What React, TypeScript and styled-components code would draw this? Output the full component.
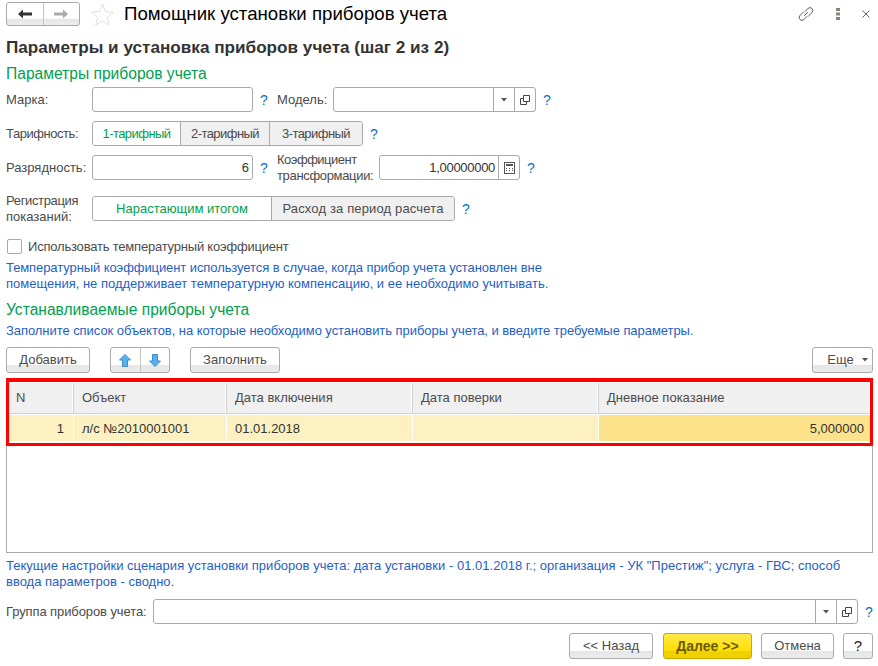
import styled, { createGlobalStyle } from 'styled-components';

const GlobalStyle = createGlobalStyle`
  html, body {
    margin: 0;
    padding: 0;
    background: #fff;
    font-family: "Liberation Sans", Arial, sans-serif;
    font-size: 13px;
    color: #4b4b4b;
  }
  * {
    box-sizing: border-box;
  }
`;

const btnBg = 'linear-gradient(#fff 0, #fff 70%, #e6e6e6 72%, #ececec 100%)';

const Page = styled.div`
  width: 878px;
  height: 666px;
  padding: 2px 5px 0 6px;
  overflow: hidden;
`;

const TitleBar = styled.div`
  display: flex;
  align-items: center;
  height: 24px;
`;

const NavGroup = styled.div`
  display: flex;
  width: 74px;
  height: 24px;
  border: 1px solid #a9a9a9;
  border-radius: 3px;
  background: ${btnBg};
`;

const NavBtn = styled.div<{ $divided?: boolean }>`
  flex: 1;
  display: flex;
  align-items: center;
  justify-content: center;
  border-left: ${(p) => (p.$divided ? '1px solid #c4c4c4' : 'none')};
`;

const StarBox = styled.div`
  display: flex;
  margin-left: 11px;
`;

const Title = styled.div`
  margin-left: 10px;
  font-size: 18.67px;
  color: #000;
  flex: 1;
`;

const TitleTools = styled.div`
  display: flex;
  align-items: center;
  gap: 22px;
  margin-right: 3px;
`;

const Heading = styled.div`
  margin-top: 11px;
  font-size: 17.15px;
  font-weight: bold;
  line-height: 20px;
  color: #333;
`;

const SectionTitle = styled.div<{ $top: number }>`
  margin-top: ${(p) => p.$top}px;
  font-size: 15.6px;
  line-height: 18px;
  color: #00a04f;
`;

const FormRow = styled.div<{ $top: number }>`
  display: flex;
  align-items: center;
  height: 25px;
  margin-top: ${(p) => p.$top}px;
`;

const Label = styled.div<{ $w: number }>`
  width: ${(p) => p.$w}px;
  flex: none;
  line-height: 16px;
  color: #4b4b4b;
`;

// the original's hinted text runs a little wider or narrower per word
const TextLine = styled.div<{ $spread?: number }>`
  white-space: nowrap;
  letter-spacing: ${(p) => p.$spread ?? 0}px;
`;

const Field = styled.div<{ $w: number }>`
  display: flex;
  align-items: stretch;
  flex: none;
  width: ${(p) => p.$w}px;
  height: 25px;
  border: 1px solid #a9a9a9;
  border-radius: 3px;
  background: #fff;
`;

const FieldValue = styled.div<{ $spread?: number }>`
  flex: 1;
  text-align: right;
  line-height: 23px;
  padding-right: 3px;
  letter-spacing: ${(p) => p.$spread ?? 0}px;
  color: #333;
`;

const FieldBtn = styled.div`
  flex: none;
  width: 21px;
  display: flex;
  align-items: center;
  justify-content: center;
  border-left: 1px solid #a9a9a9;
`;

const Help = styled.div<{ $w: number }>`
  flex: none;
  width: ${(p) => p.$w}px;
  padding-left: 7px;
  font-size: 14px;
  color: #0a72c4;
`;

const Segments = styled.div`
  display: flex;
  flex: none;
  height: 25px;
  border: 1px solid #a9a9a9;
  border-radius: 3px;
  overflow: hidden;
`;

const Segment = styled.div<{ $w: number; $active?: boolean; $spread?: number }>`
  width: ${(p) => p.$w}px;
  display: flex;
  align-items: center;
  justify-content: center;
  letter-spacing: ${(p) => p.$spread ?? 0}px;
  color: ${(p) => (p.$active ? '#00a04f' : '#4b4b4b')};
  background: ${(p) => (p.$active ? '#fff' : '#f0f0f0')};
  border-left: ${(p) => (p.$active ? 'none' : '1px solid #a9a9a9')};
`;

const CheckRow = styled.div`
  display: flex;
  align-items: center;
  gap: 6px;
  height: 16px;
  margin-top: 17px;
  padding-left: 1px;
  letter-spacing: -0.2px;
`;

const CheckBox = styled.div`
  width: 15px;
  height: 15px;
  border: 1px solid #a9a9a9;
  border-radius: 2px;
`;

const Note = styled.div<{ $top: number }>`
  margin-top: ${(p) => p.$top}px;
  line-height: 16px;
  color: #1f5fc4;
`;

const Toolbar = styled.div`
  display: flex;
  align-items: stretch;
  height: 26px;
  margin-top: 8px;
`;

const Button = styled.div<{ $w: number; $left?: number; $primary?: boolean }>`
  width: ${(p) => p.$w}px;
  margin-left: ${(p) => p.$left ?? 0}px;
  flex: none;
  display: flex;
  align-items: center;
  justify-content: center;
  gap: 6px;
  padding-bottom: 1px;
  border: 1px solid ${(p) => (p.$primary ? '#c9a800' : '#a9a9a9')};
  border-radius: 3px;
  font-size: ${(p) => (p.$primary ? 14 : 13)}px;
  font-weight: ${(p) => (p.$primary ? 'bold' : 'normal')};
  color: ${(p) => (p.$primary ? '#6b5a00' : '#4b4b4b')};
  background: ${(p) =>
    p.$primary ? 'linear-gradient(#ffe94d 0, #ffdf00 70%, #f0d000 72%, #f0d000 100%)' : btnBg};
`;

const MoreButton = styled(Button)`
  padding-left: 10px;
  gap: 8px;
`;

const HelpButton = styled(Button)`
  font-size: 15px;
  color: #222;
`;

const ArrowGroup = styled.div`
  display: flex;
  width: 60px;
  margin-left: 20px;
  border: 1px solid #a9a9a9;
  border-radius: 3px;
  background: ${btnBg};
`;

const Spacer = styled.div`
  flex: 1;
`;

const GridBox = styled.div`
  position: relative;
  height: 175px;
  margin-top: 5px;
  border: 1px solid #a9a9a9;
  padding: 4px 2px 0 2px;
`;

const Highlight = styled.div`
  position: absolute;
  left: -1px;
  right: -1px;
  top: -1px;
  height: 68px;
  border: 3px solid #f00;
  border-top-width: 4px;
  pointer-events: none;
`;

const GridRow = styled.div<{ $header?: boolean }>`
  display: grid;
  grid-template-columns: 64px 153px 186px 186px 1fr;
  height: ${(p) => (p.$header ? 31 : 26)}px;
  margin-bottom: ${(p) => (p.$header ? 1 : 0)}px;
  border-bottom: ${(p) => (p.$header ? '1px solid #d0d0d0' : 'none')};
`;

const HeadCell = styled.div`
  display: flex;
  align-items: center;
  padding-left: 8px;
  padding-bottom: 1px;
  background: #f0f0f0;
  border-right: 1px solid #fff;
  border-left: 1px solid #d0d0d0;
  color: #4b4b4b;
  &:first-child {
    border-left: none;
    padding-left: 7px;
  }
`;

const Cell = styled.div<{ $right?: boolean; $current?: boolean }>`
  display: flex;
  align-items: center;
  justify-content: ${(p) => (p.$right ? 'flex-end' : 'flex-start')};
  padding: 0 ${(p) => (p.$right ? 6 : 8)}px;
  background: ${(p) => (p.$current ? '#fde28c' : '#fdf1c2')};
  border-left: 1px solid #fff;
  color: #333;
`;

const NumberCell = styled(Cell)`
  padding-right: 9px;
  border-left: none;
`;

const Footer = styled.div`
  display: flex;
  justify-content: flex-end;
  height: 26px;
  margin-top: 9px;
`;

const Arrow = ({ dir, color }: { dir: 'left' | 'right'; color: string }) => (
  <svg width="14" height="10" viewBox="0 0 14 10">
    <path
      d={dir === 'left' ? 'M0 5 5 .5v3h9v3H5v3z' : 'M14 5 9 .5v3H0v3h9v3z'}
      fill={color}
    />
  </svg>
);

const Star = () => (
  <svg width="23" height="23" viewBox="0 0 23 23">
    <path
      d="M11.5 1 14.5 8.6 22.5 9.2 16.3 14.3 18.3 22 11.5 17.8 4.7 22 6.7 14.3 .5 9.2 8.5 8.6z"
      fill="#fff"
      stroke="#cfdcd2"
      strokeWidth="0.8"
    />
  </svg>
);

const LinkIcon = () => (
  <svg width="16" height="16" viewBox="0 0 16 16" fill="none" stroke="#5c5c5c" strokeWidth="1" strokeLinecap="round">
    <path d="M7 5.500 10 2.500A2.800 2.800 0 0 1 14 6.500L10.500 10" />
    <path d="M9 10.500 6 13.500A2.800 2.800 0 0 1 2 9.500L5.500 6" />
    <path d="M6.500 9.500 9.500 6.500" />
  </svg>
);

const DotsIcon = () => (
  <svg width="4" height="12" viewBox="0 0 4 12">
    <rect y="0" width="4" height="3" fill="#7d8a80" />
    <rect y="4.500" width="4" height="3" fill="#7d8a80" />
    <rect y="9" width="4" height="3" fill="#7d8a80" />
  </svg>
);

const CloseIcon = () => (
  <svg width="8" height="8" viewBox="0 0 8 8" stroke="#666" strokeWidth="1">
    <path d="M.5.5l7 7M7.500.5l-7 7" />
  </svg>
);

const Caret = () => (
  <svg width="6" height="4" viewBox="0 0 6 4">
    <path d="M0 0h6L3 3.500z" fill="#555" />
  </svg>
);

const OpenIcon = () => (
  <svg width="10" height="10" viewBox="0 0 10 10" fill="#fff" stroke="#444" strokeWidth="1">
    <path d="M.5 3.500h6v6h-6z" />
    <path d="M3.500.5h6v6h-6z" />
  </svg>
);

const CalcIcon = () => (
  <svg width="11" height="12" viewBox="0 0 11 12">
    <rect x=".5" y=".5" width="10" height="11" fill="#fff" stroke="#555" />
    <rect x="2" y="2" width="7" height="2" fill="#555" />
    <path d="M2 6h1v1H2zM5 6h1v1H5zM8 6h1v1H8zM2 8h1v1H2zM5 8h1v1H5zM8 8h1v1H8z" fill="#555" />
  </svg>
);

const UpDown = ({ down }: { down?: boolean }) => (
  <svg width="12" height="13" viewBox="0 0 12 13">
    <path
      d={down ? 'M6 12.500 .5 7h3V.5h5V7h3z' : 'M6 .5 11.500 6h-3v6.500h-5V6h-3z'}
      fill="#55b0f0"
      stroke="#3f8cc8"
      strokeWidth="1"
    />
  </svg>
);

export default function App() {
  return (
    <Page>
      <GlobalStyle />
      <TitleBar>
        <NavGroup>
          <NavBtn>
            <Arrow dir="left" color="#333" />
          </NavBtn>
          <NavBtn $divided>
            <Arrow dir="right" color="#aaa" />
          </NavBtn>
        </NavGroup>
        <StarBox>
          <Star />
        </StarBox>
        <Title>Помощник установки приборов учета</Title>
        <TitleTools>
          <LinkIcon />
          <DotsIcon />
          <CloseIcon />
        </TitleTools>
      </TitleBar>

      <Heading>Параметры и установка приборов учета (шаг 2 из 2)</Heading>
      <SectionTitle $top={8}>Параметры приборов учета</SectionTitle>

      <FormRow $top={4}>
        <Label $w={86}>
          <TextLine>Марка:</TextLine>
        </Label>
        <Field $w={161} />
        <Help $w={24}>?</Help>
        <Label $w={56}>
          <TextLine>Модель:</TextLine>
        </Label>
        <Field $w={203}>
          <FieldValue />
          <FieldBtn>
            <Caret />
          </FieldBtn>
          <FieldBtn>
            <OpenIcon />
          </FieldBtn>
        </Field>
        <Help $w={20}>?</Help>
      </FormRow>

      <FormRow $top={9}>
        <Label $w={86}>
          <TextLine $spread={-0.45}>Тарифность:</TextLine>
        </Label>
        <Segments>
          <Segment $w={87} $active $spread={-0.55}>
            1-тарифный
          </Segment>
          <Segment $w={89} $spread={-0.55}>
            2-тарифный
          </Segment>
          <Segment $w={93} $spread={-0.55}>
            3-тарифный
          </Segment>
        </Segments>
        <Help $w={20}>?</Help>
      </FormRow>

      <FormRow $top={9}>
        <Label $w={86}>
          <TextLine>Разрядность:</TextLine>
        </Label>
        <Field $w={161}>
          <FieldValue>6</FieldValue>
        </Field>
        <Help $w={24}>?</Help>
        <Label $w={102}>
          <TextLine $spread={-0.5}>Коэффициент</TextLine>
          <TextLine $spread={-0.33}>трансформации:</TextLine>
        </Label>
        <Field $w={141}>
          <FieldValue $spread={-0.3}>1,00000000</FieldValue>
          <FieldBtn>
            <CalcIcon />
          </FieldBtn>
        </Field>
        <Help $w={20}>?</Help>
      </FormRow>

      <FormRow $top={16}>
        <Label $w={86}>
          <TextLine $spread={-0.35}>Регистрация</TextLine>
          <TextLine>показаний:</TextLine>
        </Label>
        <Segments>
          <Segment $w={178} $active>
            Нарастающим итогом
          </Segment>
          <Segment $w={183} $spread={0.15}>
            Расход за период расчета
          </Segment>
        </Segments>
        <Help $w={20}>?</Help>
      </FormRow>

      <CheckRow>
        <CheckBox />
        Использовать температурный коэффициент
      </CheckRow>

      <Note $top={6}>
        <TextLine $spread={-0.085}>
          Температурный коэффициент используется в случае, когда прибор учета установлен вне
        </TextLine>
        <TextLine>помещения, не поддерживает температурную компенсацию, и ее необходимо учитывать.</TextLine>
      </Note>

      <SectionTitle $top={9}>Устанавливаемые приборы учета</SectionTitle>
      <Note $top={4}>
        <TextLine $spread={-0.057}>
          Заполните список объектов, на которые необходимо установить приборы учета, и введите требуемые параметры.
        </TextLine>
      </Note>

      <Toolbar>
        <Button $w={84}>Добавить</Button>
        <ArrowGroup>
          <NavBtn>
            <UpDown />
          </NavBtn>
          <NavBtn $divided>
            <UpDown down />
          </NavBtn>
        </ArrowGroup>
        <Button $w={90} $left={20}>
          Заполнить
        </Button>
        <Spacer />
        <MoreButton $w={61}>
          Еще
          <Caret />
        </MoreButton>
      </Toolbar>

      <GridBox>
        <GridRow $header>
          <HeadCell>N</HeadCell>
          <HeadCell>Объект</HeadCell>
          <HeadCell>Дата включения</HeadCell>
          <HeadCell>Дата поверки</HeadCell>
          <HeadCell>Дневное показание</HeadCell>
        </GridRow>
        <GridRow>
          <NumberCell $right>1</NumberCell>
          <Cell>л/с №2010001001</Cell>
          <Cell>01.01.2018</Cell>
          <Cell />
          <Cell $right $current>
            5,000000
          </Cell>
        </GridRow>
        <Highlight />
      </GridBox>

      <Note $top={5}>
        <TextLine $spread={0.02}>
          Текущие настройки сценария установки приборов учета: дата установки - 01.01.2018 г.; организация - УК "Престиж"; услуга - ГВС; способ
        </TextLine>
        <TextLine>ввода параметров - сводно.</TextLine>
      </Note>

      <FormRow $top={9}>
        <Label $w={147}>
          <TextLine $spread={-0.1}>Группа приборов учета:</TextLine>
        </Label>
        <Field $w={705}>
          <FieldValue />
          <FieldBtn>
            <Caret />
          </FieldBtn>
          <FieldBtn>
            <OpenIcon />
          </FieldBtn>
        </Field>
        <Help $w={15}>?</Help>
      </FormRow>

      <Footer>
        <Button $w={84}>{'<< Назад'}</Button>
        <Button $w={89} $left={10} $primary>
          {'Далее >>'}
        </Button>
        <Button $w={73} $left={9}>
          Отмена
        </Button>
        <HelpButton $w={30} $left={9}>
          ?
        </HelpButton>
      </Footer>
    </Page>
  );
}
